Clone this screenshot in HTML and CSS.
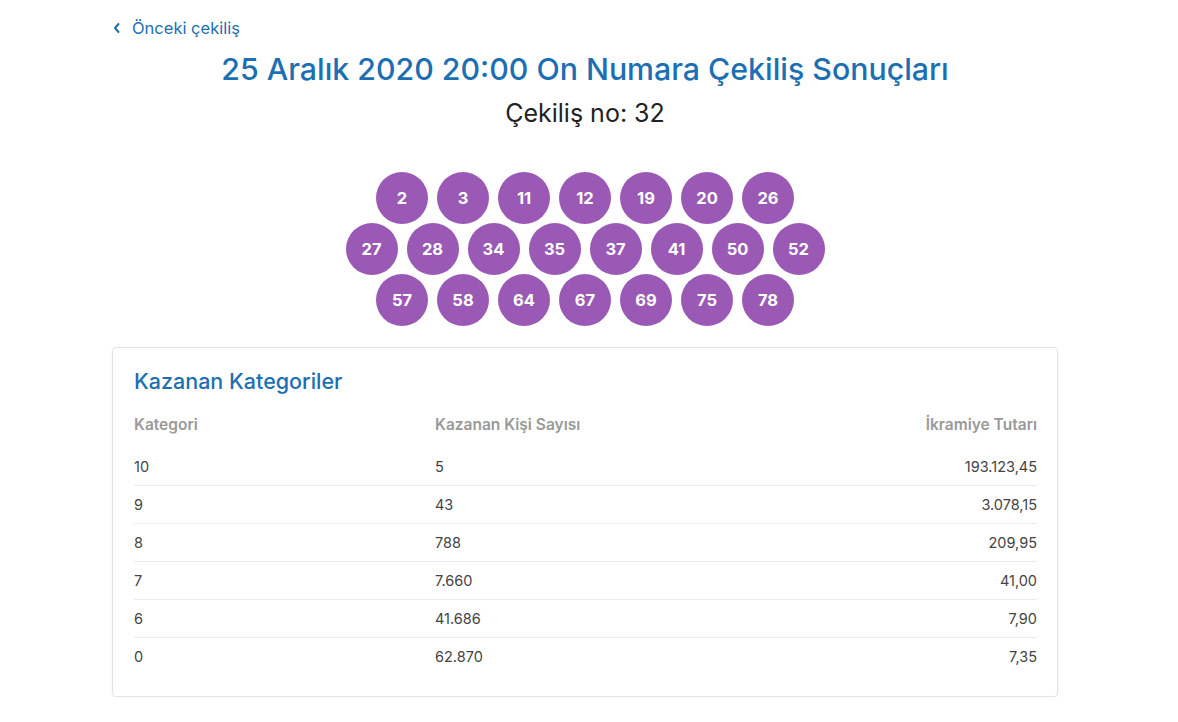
FILE: index.html
```html
<!DOCTYPE html>
<html lang="tr">
<head>
<meta charset="utf-8">
<title>On Numara Çekiliş Sonuçları</title>
<link rel="stylesheet" href="styles.css">
</head>
<body>
<div class="page">
  <a class="back" href="#">
    <svg class="chev" width="10" height="12" viewBox="0 0 10 12"><path d="M6.5 2 L3 6 L6.5 10" fill="none" stroke="currentColor" stroke-width="2" stroke-linecap="round" stroke-linejoin="round"/></svg>
    <span>Önceki çekiliş</span>
  </a>
  <h1 class="title">25 Aralık 2020 20:00 On Numara Çekiliş Sonuçları</h1>
  <div class="drawno">Çekiliş no: 32</div>

  <div class="balls">
    <div class="ball-row">
      <span class="ball">2</span><span class="ball">3</span><span class="ball">11</span><span class="ball">12</span><span class="ball">19</span><span class="ball">20</span><span class="ball">26</span>
    </div>
    <div class="ball-row">
      <span class="ball">27</span><span class="ball">28</span><span class="ball">34</span><span class="ball">35</span><span class="ball">37</span><span class="ball">41</span><span class="ball">50</span><span class="ball">52</span>
    </div>
    <div class="ball-row">
      <span class="ball">57</span><span class="ball">58</span><span class="ball">64</span><span class="ball">67</span><span class="ball">69</span><span class="ball">75</span><span class="ball">78</span>
    </div>
  </div>

  <div class="card">
    <h2 class="card-title">Kazanan Kategoriler</h2>
    <div class="table">
      <div class="row head"><span>Kategori</span><span>Kazanan Kişi Sayısı</span><span class="num">İkramiye Tutarı</span></div>
      <div class="row"><span>10</span><span>5</span><span class="num">193.123,45</span></div>
      <div class="row"><span>9</span><span>43</span><span class="num">3.078,15</span></div>
      <div class="row"><span>8</span><span>788</span><span class="num">209,95</span></div>
      <div class="row"><span>7</span><span>7.660</span><span class="num">41,00</span></div>
      <div class="row"><span>6</span><span>41.686</span><span class="num">7,90</span></div>
      <div class="row last"><span>0</span><span>62.870</span><span class="num">7,35</span></div>
    </div>
  </div>
</div>
</body>
</html>
```
FILE: styles.css
```css
html, body {
  margin: 0;
  padding: 0;
  background: #ffffff;
}
body {
  font-family: "Inter", "Noto Sans", sans-serif;
  color: #333;
}
.page {
  width: 946px;
  margin-left: 112px;
  padding-top: 17px;
}
.back {
  display: inline-flex;
  align-items: center;
  gap: 10px;
  color: #1c6fb2;
  text-decoration: none;
  font-size: 16.5px;
  line-height: 22px;
}
.chev { display: block; }
.title {
  margin: 10px 0 0;
  text-align: center;
  color: #1c6fb2;
  font-weight: 500;
  font-size: 30.3px;
  line-height: 40px;
}
.drawno {
  margin-top: 8px;
  text-align: center;
  font-size: 25px;
  line-height: 32px;
  color: #222;
}
.balls {
  margin-top: 43px;
  display: flex;
  flex-direction: column;
  align-items: center;
}
.ball-row {
  display: flex;
  gap: 9px;
}
.ball-row + .ball-row {
  margin-top: -1px;
}
.ball {
  width: 52px;
  height: 52px;
  border-radius: 50%;
  background: #9b59b6;
  color: #fff;
  font-weight: 700;
  font-size: 16.5px;
  display: flex;
  align-items: center;
  justify-content: center;
}
.card {
  margin-top: 21px;
  border: 1px solid #e3e3e3;
  border-radius: 4px;
  box-shadow: 0 1px 3px rgba(0,0,0,0.06);
  padding: 18px 20px 21px 21px;
}
.card-title {
  margin: 0;
  color: #1c6fb2;
  font-weight: 500;
  font-size: 21.5px;
  line-height: 30px;
}
.table {
  margin-top: 6px;
}
.row {
  display: grid;
  grid-template-columns: 1fr 1fr 1fr;
  font-size: 14.5px;
  line-height: 20px;
  padding: 9px 0 8px;
  border-bottom: 1px solid #ececec;
  color: #444;
}
.row.head {
  color: #999;
  font-weight: 600;
  font-size: 15.5px;
  padding: 13px 0 13px;
  border-bottom: none;
}
.row.last { border-bottom: none; }
.num { text-align: right; }
```
